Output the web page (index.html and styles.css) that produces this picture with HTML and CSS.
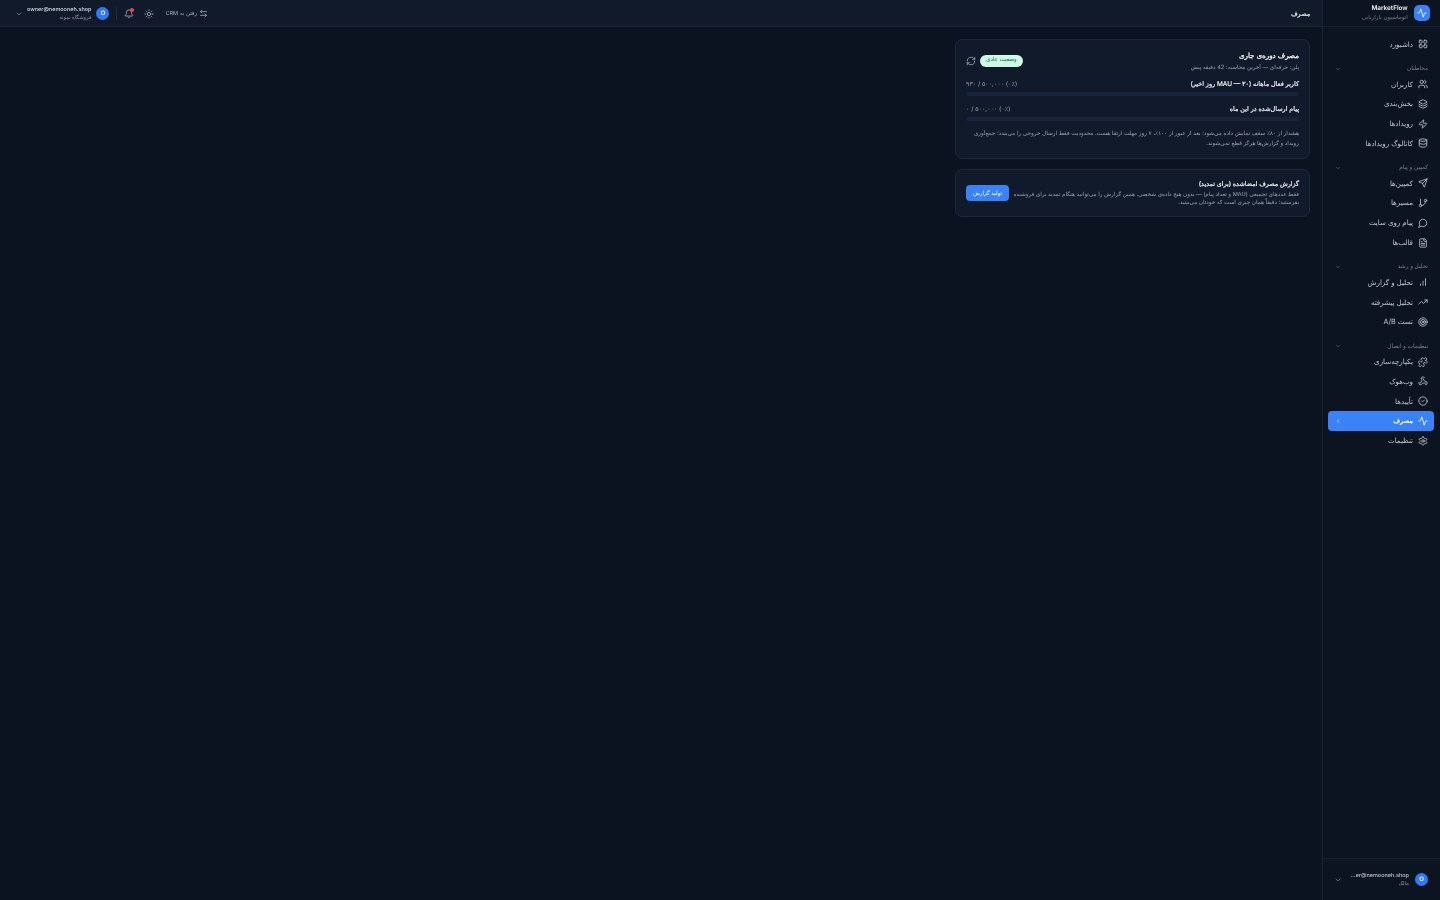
FILE: index.html
```html
<!DOCTYPE html>
<html lang="fa" dir="rtl">
<head>
    <meta charset="UTF-8">
    <title>MarketFlow - مصرف</title>
    <link rel="stylesheet" href="styles.css">
</head>
<body>
    <svg class="sprite" xmlns="http://www.w3.org/2000/svg">
        <symbol id="i-activity" viewBox="0 0 24 24"><path d="M22 12h-2.48a2 2 0 0 0-1.93 1.46l-2.35 8.36a.25.25 0 0 1-.48 0L9.24 2.18a.25.25 0 0 0-.48 0l-2.35 8.36A2 2 0 0 1 4.49 12H2"/></symbol>
        <symbol id="i-grid" viewBox="0 0 24 24"><rect x="3" y="3" width="7" height="7" rx="1.5"/><rect x="14" y="3" width="7" height="7" rx="1.5"/><rect x="3" y="14" width="7" height="7" rx="1.5"/><rect x="14" y="14" width="7" height="7" rx="1.5"/></symbol>
        <symbol id="i-users" viewBox="0 0 24 24"><path d="M16 21v-2a4 4 0 0 0-4-4H6a4 4 0 0 0-4 4v2"/><circle cx="9" cy="7" r="4"/><path d="M22 21v-2a4 4 0 0 0-3-3.87"/><path d="M16 3.13a4 4 0 0 1 0 7.75"/></symbol>
        <symbol id="i-layers" viewBox="0 0 24 24"><path d="M12.83 2.18a2 2 0 0 0-1.66 0L2.6 6.08a1 1 0 0 0 0 1.83l8.58 3.91a2 2 0 0 0 1.66 0l8.58-3.9a1 1 0 0 0 0-1.83z"/><path d="M2 12a1 1 0 0 0 .58.91l8.6 3.91a2 2 0 0 0 1.65 0l8.58-3.9A1 1 0 0 0 22 12"/><path d="M2 17a1 1 0 0 0 .58.91l8.6 3.91a2 2 0 0 0 1.65 0l8.58-3.9A1 1 0 0 0 22 17"/></symbol>
        <symbol id="i-zap" viewBox="0 0 24 24"><path d="M4 14a1 1 0 0 1-.78-1.63l9.9-10.2a.5.5 0 0 1 .86.46l-1.92 6.02A1 1 0 0 0 13 10h7a1 1 0 0 1 .78 1.63l-9.9 10.2a.5.5 0 0 1-.86-.46l1.92-6.02A1 1 0 0 0 11 14z"/></symbol>
        <symbol id="i-database" viewBox="0 0 24 24"><ellipse cx="12" cy="5" rx="9" ry="3"/><path d="M3 5v14a9 3 0 0 0 18 0V5"/><path d="M3 12a9 3 0 0 0 18 0"/></symbol>
        <symbol id="i-send" viewBox="0 0 24 24"><path d="M14.54 21.69a.5.5 0 0 0 .94-.03l6.5-19a.5.5 0 0 0-.64-.64l-19 6.5a.5.5 0 0 0-.03.94l7.93 3.18a2 2 0 0 1 1.11 1.11z"/><path d="m21.85 2.15-10.94 10.94"/></symbol>
        <symbol id="i-branch" viewBox="0 0 24 24"><path d="M6 3v12"/><circle cx="18" cy="6" r="3"/><circle cx="6" cy="18" r="3"/><path d="M18 9a9 9 0 0 1-9 9"/></symbol>
        <symbol id="i-message" viewBox="0 0 24 24"><path d="M7.9 20A9 9 0 1 0 4 16.1L2 22Z"/></symbol>
        <symbol id="i-file" viewBox="0 0 24 24"><path d="M15 2H6a2 2 0 0 0-2 2v16a2 2 0 0 0 2 2h12a2 2 0 0 0 2-2V7Z"/><path d="M14 2v4a2 2 0 0 0 2 2h4"/><path d="M16 13H8"/><path d="M16 17H8"/><path d="M10 9H8"/></symbol>
        <symbol id="i-chart" viewBox="0 0 24 24"><path d="M18 20V4"/><path d="M12 20V10"/><path d="M6 20v-3"/></symbol>
        <symbol id="i-trend" viewBox="0 0 24 24"><path d="m22 7-8.5 8.5-5-5L2 17"/><path d="M16 7h6v6"/></symbol>
        <symbol id="i-target" viewBox="0 0 24 24"><circle cx="12" cy="12" r="10"/><circle cx="12" cy="12" r="6"/><circle cx="12" cy="12" r="2"/></symbol>
        <symbol id="i-puzzle" viewBox="0 0 24 24"><path d="M19.44 7.85c-.05.32.06.65.29.88l1.57 1.57c.47.47.71 1.09.71 1.7s-.24 1.23-.71 1.7l-1.61 1.61a.98.98 0 0 1-.84.28c-.47-.07-.8-.48-.97-.92a2.5 2.5 0 1 0-3.21 3.21c.44.17.85.5.92.97a.98.98 0 0 1-.28.84L14 22.3c-.47.47-1.09.7-1.7.7s-1.23-.23-1.7-.7l-1.57-1.57a1.03 1.03 0 0 0-.88-.29c-.49.07-.84.5-1.02.97a2.5 2.5 0 1 1-3.24-3.24c.46-.18.9-.53.97-1.02a1.03 1.03 0 0 0-.29-.88L1.7 14.7A2.4 2.4 0 0 1 1 13c0-.61.23-1.23.7-1.7l1.53-1.53c.24-.24.58-.35.92-.3.5.08.84.52 1.03 1a2.5 2.5 0 1 0 3.23-3.24c-.47-.18-.92-.52-1-1.02-.05-.34.06-.68.3-.92L9.3 2.7A2.4 2.4 0 0 1 11 2c.61 0 1.23.24 1.7.71l1.57 1.57c.23.23.56.34.88.29.49-.07.84-.5 1.02-.97a2.5 2.5 0 1 1 3.24 3.24c-.46.18-.9.53-.97 1.01Z"/></symbol>
        <symbol id="i-webhook" viewBox="0 0 24 24"><path d="M18 16.98h-5.99c-1.1 0-1.95.94-2.48 1.9A4 4 0 0 1 2 17c.01-.7.2-1.4.57-2"/><path d="m6 17 3.13-5.78c.53-.97.1-2.18-.5-3.1a4 4 0 1 1 6.89-4.06"/><path d="m12 6 3.13 5.73C15.66 12.7 16.9 13 18 13a4 4 0 0 1 0 8"/></symbol>
        <symbol id="i-check" viewBox="0 0 24 24"><circle cx="12" cy="12" r="10"/><path d="m9 12 2 2 4-4"/></symbol>
        <symbol id="i-settings" viewBox="0 0 24 24"><path d="M12.22 2h-.44a2 2 0 0 0-2 2v.18a2 2 0 0 1-1 1.73l-.43.25a2 2 0 0 1-2 0l-.15-.08a2 2 0 0 0-2.73.73l-.22.38a2 2 0 0 0 .73 2.73l.15.1a2 2 0 0 1 1 1.72v.51a2 2 0 0 1-1 1.74l-.15.09a2 2 0 0 0-.73 2.73l.22.38a2 2 0 0 0 2.73.73l.15-.08a2 2 0 0 1 2 0l.43.25a2 2 0 0 1 1 1.73V20a2 2 0 0 0 2 2h.44a2 2 0 0 0 2-2v-.18a2 2 0 0 1 1-1.73l.43-.25a2 2 0 0 1 2 0l.15.08a2 2 0 0 0 2.73-.73l.22-.39a2 2 0 0 0-.73-2.73l-.15-.08a2 2 0 0 1-1-1.74v-.5a2 2 0 0 1 1-1.74l.15-.09a2 2 0 0 0 .73-2.73l-.22-.38a2 2 0 0 0-2.73-.73l-.15.08a2 2 0 0 1-2 0l-.43-.25a2 2 0 0 1-1-1.73V4a2 2 0 0 0-2-2z"/><circle cx="12" cy="12" r="3"/></symbol>
        <symbol id="i-sun" viewBox="0 0 24 24"><circle cx="12" cy="12" r="4"/><path d="M12 2v2"/><path d="M12 20v2"/><path d="m4.93 4.93 1.41 1.41"/><path d="m17.66 17.66 1.41 1.41"/><path d="M2 12h2"/><path d="M20 12h2"/><path d="m6.34 17.66-1.41 1.41"/><path d="m19.07 4.93-1.41 1.41"/></symbol>
        <symbol id="i-bell" viewBox="0 0 24 24"><path d="M10.27 21a2 2 0 0 0 3.46 0"/><path d="M3.26 15.33A1 1 0 0 0 4 17h16a1 1 0 0 0 .74-1.67C19.41 13.96 18 12.5 18 8A6 6 0 0 0 6 8c0 4.5-1.41 5.96-2.74 7.33"/></symbol>
        <symbol id="i-swap" viewBox="0 0 24 24"><path d="M8 3 4 7l4 4"/><path d="M4 7h16"/><path d="m16 21 4-4-4-4"/><path d="M20 17H4"/></symbol>
        <symbol id="i-refresh" viewBox="0 0 24 24"><path d="M3 12a9 9 0 0 1 9-9 9.75 9.75 0 0 1 6.74 2.74L21 8"/><path d="M21 3v5h-5"/><path d="M21 12a9 9 0 0 1-9 9 9.75 9.75 0 0 1-6.74-2.74L3 16"/><path d="M8 16H3v5"/></symbol>
        <symbol id="i-down" viewBox="0 0 24 24"><path d="m6 9 6 6 6-6"/></symbol>
        <symbol id="i-left" viewBox="0 0 24 24"><path d="m15 18-6-6 6-6"/></symbol>
    </svg>

    <aside class="sidebar">
        <div class="brand">
            <span class="brand-logo"><svg class="icon"><use href="#i-activity"/></svg></span>
            <div class="brand-text">
                <div class="brand-name">MarketFlow</div>
                <div class="brand-sub">اتوماسیون بازاریابی</div>
            </div>
        </div>

        <nav class="nav">
            <a class="nav-item"><svg class="icon"><use href="#i-grid"/></svg>داشبورد</a>

            <div class="nav-label"><span>مخاطبان</span><svg class="chev"><use href="#i-down"/></svg></div>
            <a class="nav-item"><svg class="icon"><use href="#i-users"/></svg>کاربران</a>
            <a class="nav-item"><svg class="icon"><use href="#i-layers"/></svg>بخش‌بندی</a>
            <a class="nav-item"><svg class="icon"><use href="#i-zap"/></svg>رویدادها</a>
            <a class="nav-item"><svg class="icon"><use href="#i-database"/></svg>کاتالوگ رویدادها</a>

            <div class="nav-label"><span>کمپین و پیام</span><svg class="chev"><use href="#i-down"/></svg></div>
            <a class="nav-item"><svg class="icon"><use href="#i-send"/></svg>کمپین‌ها</a>
            <a class="nav-item"><svg class="icon"><use href="#i-branch"/></svg>مسیرها</a>
            <a class="nav-item"><svg class="icon"><use href="#i-message"/></svg>پیام روی سایت</a>
            <a class="nav-item"><svg class="icon"><use href="#i-file"/></svg>قالب‌ها</a>

            <div class="nav-label"><span>تحلیل و رشد</span><svg class="chev"><use href="#i-down"/></svg></div>
            <a class="nav-item"><svg class="icon"><use href="#i-chart"/></svg>تحلیل و گزارش</a>
            <a class="nav-item"><svg class="icon"><use href="#i-trend"/></svg>تحلیل پیشرفته</a>
            <a class="nav-item"><svg class="icon"><use href="#i-target"/></svg>تست A/B</a>

            <div class="nav-label"><span>تنظیمات و اتصال</span><svg class="chev"><use href="#i-down"/></svg></div>
            <a class="nav-item"><svg class="icon"><use href="#i-puzzle"/></svg>یکپارچه‌سازی</a>
            <a class="nav-item"><svg class="icon"><use href="#i-webhook"/></svg>وب‌هوک</a>
            <a class="nav-item"><svg class="icon"><use href="#i-check"/></svg>تأییدها</a>
            <a class="nav-item active"><svg class="icon"><use href="#i-activity"/></svg>مصرف<svg class="chev end"><use href="#i-left"/></svg></a>
            <a class="nav-item"><svg class="icon"><use href="#i-settings"/></svg>تنظیمات</a>
        </nav>

        <div class="side-user">
            <span class="avatar">O</span>
            <div class="user-text">
                <div class="user-mail side-mail" dir="ltr">...er@nemooneh.shop</div>
                <div class="user-sub">مالک</div>
            </div>
            <svg class="chev end big"><use href="#i-down"/></svg>
        </div>
    </aside>

    <div class="main">
        <header class="topbar">
            <div class="page-title">مصرف</div>
            <div class="top-actions">
                <a class="crm-link"><svg class="icon"><use href="#i-swap"/></svg><span class="crm-text">رفتن به CRM</span></a>
                <svg class="icon top-icon"><use href="#i-sun"/></svg>
                <span class="bell"><svg class="icon top-icon"><use href="#i-bell"/></svg><i class="dot"></i></span>
                <span class="divider"></span>
                <span class="avatar">O</span>
                <div class="user-text">
                    <div class="user-mail" dir="ltr">owner@nemooneh.shop</div>
                    <div class="user-sub">فروشگاه نمونه</div>
                </div>
                <svg class="chev big"><use href="#i-down"/></svg>
            </div>
        </header>

        <main class="content">
            <section class="card usage">
                <div class="card-head">
                    <div>
                        <h2 class="card-title">مصرف دوره‌ی جاری</h2>
                        <p class="muted">پلن: حرفه‌ای — آخرین محاسبه: 42 دقیقه پیش</p>
                    </div>
                    <div class="head-side">
                        <span class="badge">وضعیت عادی</span>
                        <svg class="icon refresh"><use href="#i-refresh"/></svg>
                    </div>
                </div>

                <div class="meter">
                    <div class="meter-row">
                        <span class="meter-name">کاربر فعال ماهانه (MAU — ۳۰ روز اخیر)</span>
                        <span class="meter-val" dir="ltr">۹۳۰ / ۵۰۰,۰۰۰ (۰٪)</span>
                    </div>
                    <div class="bar"></div>
                </div>
                <div class="meter">
                    <div class="meter-row">
                        <span class="meter-name">پیام ارسال‌شده در این ماه</span>
                        <span class="meter-val" dir="ltr">۰ / ۵۰۰,۰۰۰ (۰٪)</span>
                    </div>
                    <div class="bar"></div>
                </div>

                <p class="note">هشدار از ۸۰٪ سقف نمایش داده می‌شود؛ بعد از عبور از ۱۰۰٪، ۷ روز مهلت ارتقا هست. محدودیت فقط ارسال خروجی را می‌بندد؛ جمع‌آوری رویداد و گزارش‌ها هرگز قطع نمی‌شوند.</p>
            </section>

            <section class="card report">
                <div class="report-text">
                    <h3 class="report-title">گزارش مصرف امضاشده (برای تمدید)</h3>
                    <p class="muted">فقط عددهای تجمیعی (MAU و تعداد پیام) — بدون هیچ داده‌ی شخصی. همین گزارش را می‌توانید هنگام تمدید برای فروشنده بفرستید؛ دقیقاً همان چیزی است که خودتان می‌بینید.</p>
                </div>
                <button class="btn">تولید گزارش</button>
            </section>
        </main>
    </div>
</body>
</html>
```

FILE: styles.css
```css
* {
    box-sizing: border-box;
}

html, body {
    height: 100%;
}

body {
    margin: 0;
    display: flex;
    background: #0b1220;
    color: #e8edf5;
    font-family: Inter, "DejaVu Sans", sans-serif;
    font-size: 7px;
    text-rendering: geometricPrecision;
    overflow: hidden;
}

/* own layers, so the small text gets grey antialiasing */
.nav, .brand-text, .side-user, .top-actions, .page-title, .content {
    will-change: transform;
}

.sprite {
    display: none;
}

.icon {
    width: 10px;
    height: 10px;
    flex: none;
    fill: none;
    stroke: currentColor;
    stroke-width: 2;
    stroke-linecap: round;
    stroke-linejoin: round;
}

.chev {
    width: 6px;
    height: 6px;
    flex: none;
    fill: none;
    stroke: currentColor;
    stroke-width: 2;
    stroke-linecap: round;
    stroke-linejoin: round;
}

.chev.big {
    width: 8px;
    height: 8px;
    color: #8a96a8;
}

.end {
    margin-right: auto;
}

/* sidebar */
.sidebar {
    width: 118px;
    flex: none;
    height: 100%;
    display: flex;
    flex-direction: column;
    background: #0d1421;
    border-left: 1px solid #1a2332;
}

.brand {
    height: 27px;
    flex: none;
    display: flex;
    align-items: center;
    gap: 6px;
    padding: 0 10px 0 8px;
    border-bottom: 1px solid #161f2e;
}

.brand-logo {
    width: 16px;
    height: 16px;
    flex: none;
    display: flex;
    align-items: center;
    justify-content: center;
    border-radius: 5px;
    background: #3b82f6;
    color: #fff;
}

.brand-name {
    font-size: 6.4px;
    font-weight: 600;
    line-height: 10px;
    color: #f1f5f9;
}

.brand-sub {
    font-size: 5.65px;
    line-height: 10px;
    color: #758093;
}

.nav {
    flex: 1;
    padding: 7.5px 6px 0 5px;
}

.nav-item {
    height: 19.8px;
    display: flex;
    align-items: center;
    gap: 5px;
    padding: 0 6px 0 7px;
    border-radius: 4px;
    color: #bcc5d2;
    font-size: 7.1px;
}

.nav-item.active {
    background: #3b82f6;
    color: #fff;
    font-size: 6.6px;
    -webkit-text-stroke: 0.2px #fff;
}

.nav-label {
    display: flex;
    align-items: center;
    justify-content: space-between;
    height: 12px;
    margin-top: 8.4px;
    margin-bottom: -0.5px;
    padding: 0 6px 0 7px;
    color: #758093;
    font-size: 5.8px;
}

.side-user {
    height: 42px;
    flex: none;
    display: flex;
    align-items: center;
    gap: 6px;
    padding: 0 12px 0 11px;
    border-top: 1px solid #161f2e;
}

.avatar {
    width: 13px;
    height: 13px;
    flex: none;
    display: flex;
    align-items: center;
    justify-content: center;
    border-radius: 50%;
    background: #2f7bf6;
    color: #fff;
    font-size: 6px;
    font-weight: 600;
}

.user-mail {
    font-size: 5.5px;
    font-weight: 500;
    line-height: 8px;
    text-align: right;
    color: #d5dbe5;
}

.side-mail {
    color: #bcc5d2;
}

.user-sub {
    font-size: 5.2px;
    line-height: 8px;
    color: #8590a1;
}

/* top bar */
.main {
    flex: 1;
    min-width: 0;
    display: flex;
    flex-direction: column;
}

.topbar {
    height: 27px;
    flex: none;
    display: flex;
    align-items: center;
    justify-content: space-between;
    padding: 0 12px 0 15px;
    background: #111a2b;
    border-bottom: 1px solid #1a2332;
}

.page-title {
    padding-top: 1px;
    font-size: 6.4px;
    color: #e8edf5;
    -webkit-text-stroke: 0.2px #e8edf5;
}

.top-actions {
    display: flex;
    align-items: center;
    color: #a3adbc;
}

.crm-link {
    display: flex;
    align-items: center;
    gap: 2px;
    font-size: 5.6px;
    margin-left: 11px;
    color: #a3adbc;
}

.crm-text {
    padding-top: 1px;
}

.crm-link .icon {
    width: 9px;
    height: 9px;
}

.top-icon {
    color: #a3adbc;
}

.top-actions > .top-icon {
    margin-left: 10px;
}

.bell {
    position: relative;
    display: flex;
    margin-left: 7px;
}

.dot {
    position: absolute;
    top: -1px;
    left: 6px;
    width: 4px;
    height: 4px;
    border-radius: 50%;
    background: #ef4444;
}

.divider {
    width: 1px;
    height: 13px;
    margin-left: 7px;
    background: #1f2a3b;
}

.top-actions .avatar {
    margin-left: 5px;
}

.top-actions .user-text {
    margin-left: 4px;
    padding-top: 2px;
}

.top-actions .user-mail {
    line-height: 7px;
}

/* content */
.content {
    flex: 1;
    padding: 12px;
}

.card {
    width: 355px;
    border: 1px solid #1e2838;
    border-radius: 7px;
    background: #111a2b;
    padding: 10px 10px 9px;
}

.card + .card {
    margin-top: 10px;
}

.card-head {
    display: flex;
    align-items: center;
    justify-content: space-between;
}

.card-title {
    margin: 0;
    font-size: 7.1px;
    font-weight: 400;
    line-height: 12px;
    color: #eef2f7;
    -webkit-text-stroke: 0.3px #eef2f7;
}

.muted {
    margin: 2px 0 0;
    font-size: 5.65px;
    line-height: 9px;
    color: #94a0b1;
}

.head-side {
    display: flex;
    align-items: center;
    gap: 4px;
    padding-bottom: 1px;
}

.badge {
    padding: 2px 6px;
    border-radius: 7px;
    background: #d1fae5;
    color: #047857;
    font-size: 5.6px;
    line-height: 7.5px;
}

.refresh {
    color: #9aa5b5;
}

.meter {
    margin-top: 6px;
}

.meter + .meter {
    margin-top: 7.5px;
}

.meter-row {
    display: flex;
    justify-content: space-between;
    line-height: 11px;
}

.meter-name {
    font-size: 6.45px;
    color: #e8edf5;
    -webkit-text-stroke: 0.2px #e8edf5;
}

.meter-val {
    font-size: 6.3px;
    color: #94a0b1;
}

.bar {
    height: 4px;
    margin-top: 2px;
    border-radius: 2px;
    background: #17233a;
}

.note {
    margin: 8px 0 0;
    font-size: 5.7px;
    line-height: 10px;
    color: #94a0b1;
}

.report {
    display: flex;
    align-items: center;
    gap: 2px;
    padding-top: 9px;
    padding-bottom: 9px;
}

.report-title {
    margin: 0;
    font-size: 6.35px;
    font-weight: 400;
    line-height: 10px;
    color: #eef2f7;
    -webkit-text-stroke: 0.2px #eef2f7;
}

.report .muted {
    margin-top: 2px;
    line-height: 8px;
}

.report-text {
    flex: 1;
}

.btn {
    flex: none;
    width: 43px;
    height: 16px;
    padding: 0;
    border: 0;
    border-radius: 4px;
    background: #3b82f6;
    color: #fff;
    font-family: inherit;
    font-size: 5.6px;
}
```
